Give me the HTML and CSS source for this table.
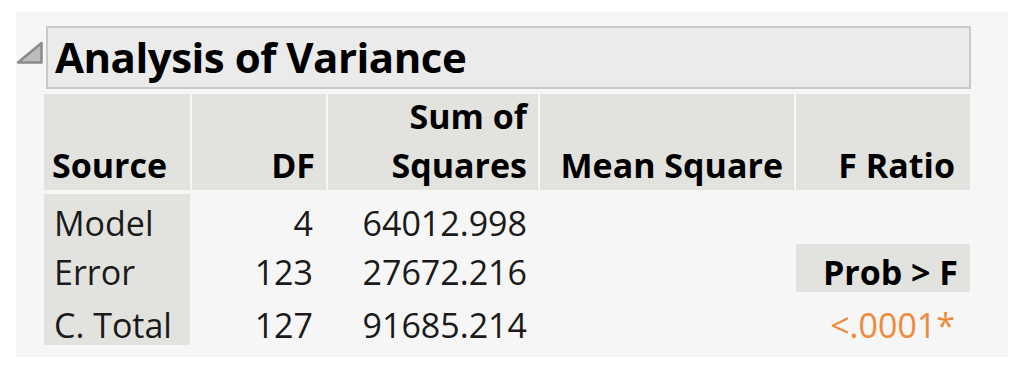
FILE: index.html
```html
<!DOCTYPE html>
<html>
<head>
<meta charset="utf-8">
<link rel="stylesheet" href="styles.css">
</head>
<body>
<div class="panel">
  <div class="outline">
    <svg class="disclosure" width="28" height="24" viewBox="0 0 28 24">
      <path d="M2 21.5 L25.5 21.5 L25.5 2 Z" fill="#bdbdbd" stroke="#8a8a8a" stroke-width="2.5" stroke-linejoin="round"/>
    </svg>
    <div class="title">Analysis of Variance</div>
  </div>
  <div class="table">
    <div class="hd left">Source</div>
    <div class="hd">DF</div>
    <div class="hd">Sum of<br>Squares</div>
    <div class="hd">Mean Square</div>
    <div class="hd last">F Ratio</div>

    <div class="src r1">Model</div>
    <div class="num r1 df">4</div>
    <div class="num r1">64012.998</div>
    <div class="num r1"></div>
    <div class="num r1"></div>

    <div class="src r2">Error</div>
    <div class="num r2 df">123</div>
    <div class="num r2">27672.216</div>
    <div class="num r2"></div>
    <div class="num r2 probcell"><span class="prob">Prob &gt; F</span></div>

    <div class="src r3">C. Total</div>
    <div class="num r3 df">127</div>
    <div class="num r3">91685.214</div>
    <div class="num r3"></div>
    <div class="num r3 sig">&lt;.0001*</div>
  </div>
</div>
</body>
</html>
```
FILE: styles.css
```css
html, body {
  margin: 0;
  padding: 0;
  background: #ffffff;
}
body {
  padding: 12px 0 0 16px;
  font-family: "Open Sans", "Noto Sans", sans-serif;
}
.panel {
  width: 992px;
  height: 345px;
  background: #f6f6f6;
  box-sizing: border-box;
  padding-top: 14px;
}
.outline {
  display: flex;
  align-items: flex-start;
}
.disclosure {
  margin-top: 15px;
  width: 28px;
  height: 24px;
  flex: none;
}
.title {
  margin-left: 2px;
  width: 925px;
  height: 63px;
  box-sizing: border-box;
  border: 2px solid #c9c9c9;
  background: #ebebeb;
  font-weight: 700;
  font-size: 42px;
  line-height: 57px;
  padding-left: 7px;
  color: #000;
  letter-spacing: -0.5px;
  white-space: nowrap;
}
.table {
  margin-left: 28px;
  margin-top: 5px;
  display: grid;
  grid-template-columns: 146px 134px 210px 254px 174px;
  grid-template-rows: 100px 50px 48px 53px;
  column-gap: 2px;
  font-size: 34px;
  white-space: nowrap;
}
.hd {
  background: #e2e2df;
  font-weight: 700;
  color: #000;
  text-align: right;
  line-height: 49px;
  padding: 0 11px 0 8px;
  display: flex;
  flex-direction: column;
  justify-content: flex-end;
  margin-bottom: 4px;
}
.hd.left {
  text-align: left;
}
.hd.last {
  padding-right: 15px;
}
.src, .num {
  color: #1a1a1a;
  line-height: 48px;
  padding: 0 11px 0 10px;
}
.src {
  background: #e2e2df;
}
.num {
  text-align: right;
}
.num.df {
  padding-right: 13px;
}
.r1 { padding-top: 5px; }
.r2 { padding-top: 4px; }
.r3 { padding-top: 9px; }
.probcell {
  padding: 0;
}
.prob {
  display: block;
  height: 48px;
  padding: 4px 12px 0 0;
  box-sizing: border-box;
  background: #e2e2df;
  font-weight: 700;
  color: #000;
  line-height: 48px;
}
.sig {
  color: #ef8a3a;
  padding-right: 15px;
}
```
